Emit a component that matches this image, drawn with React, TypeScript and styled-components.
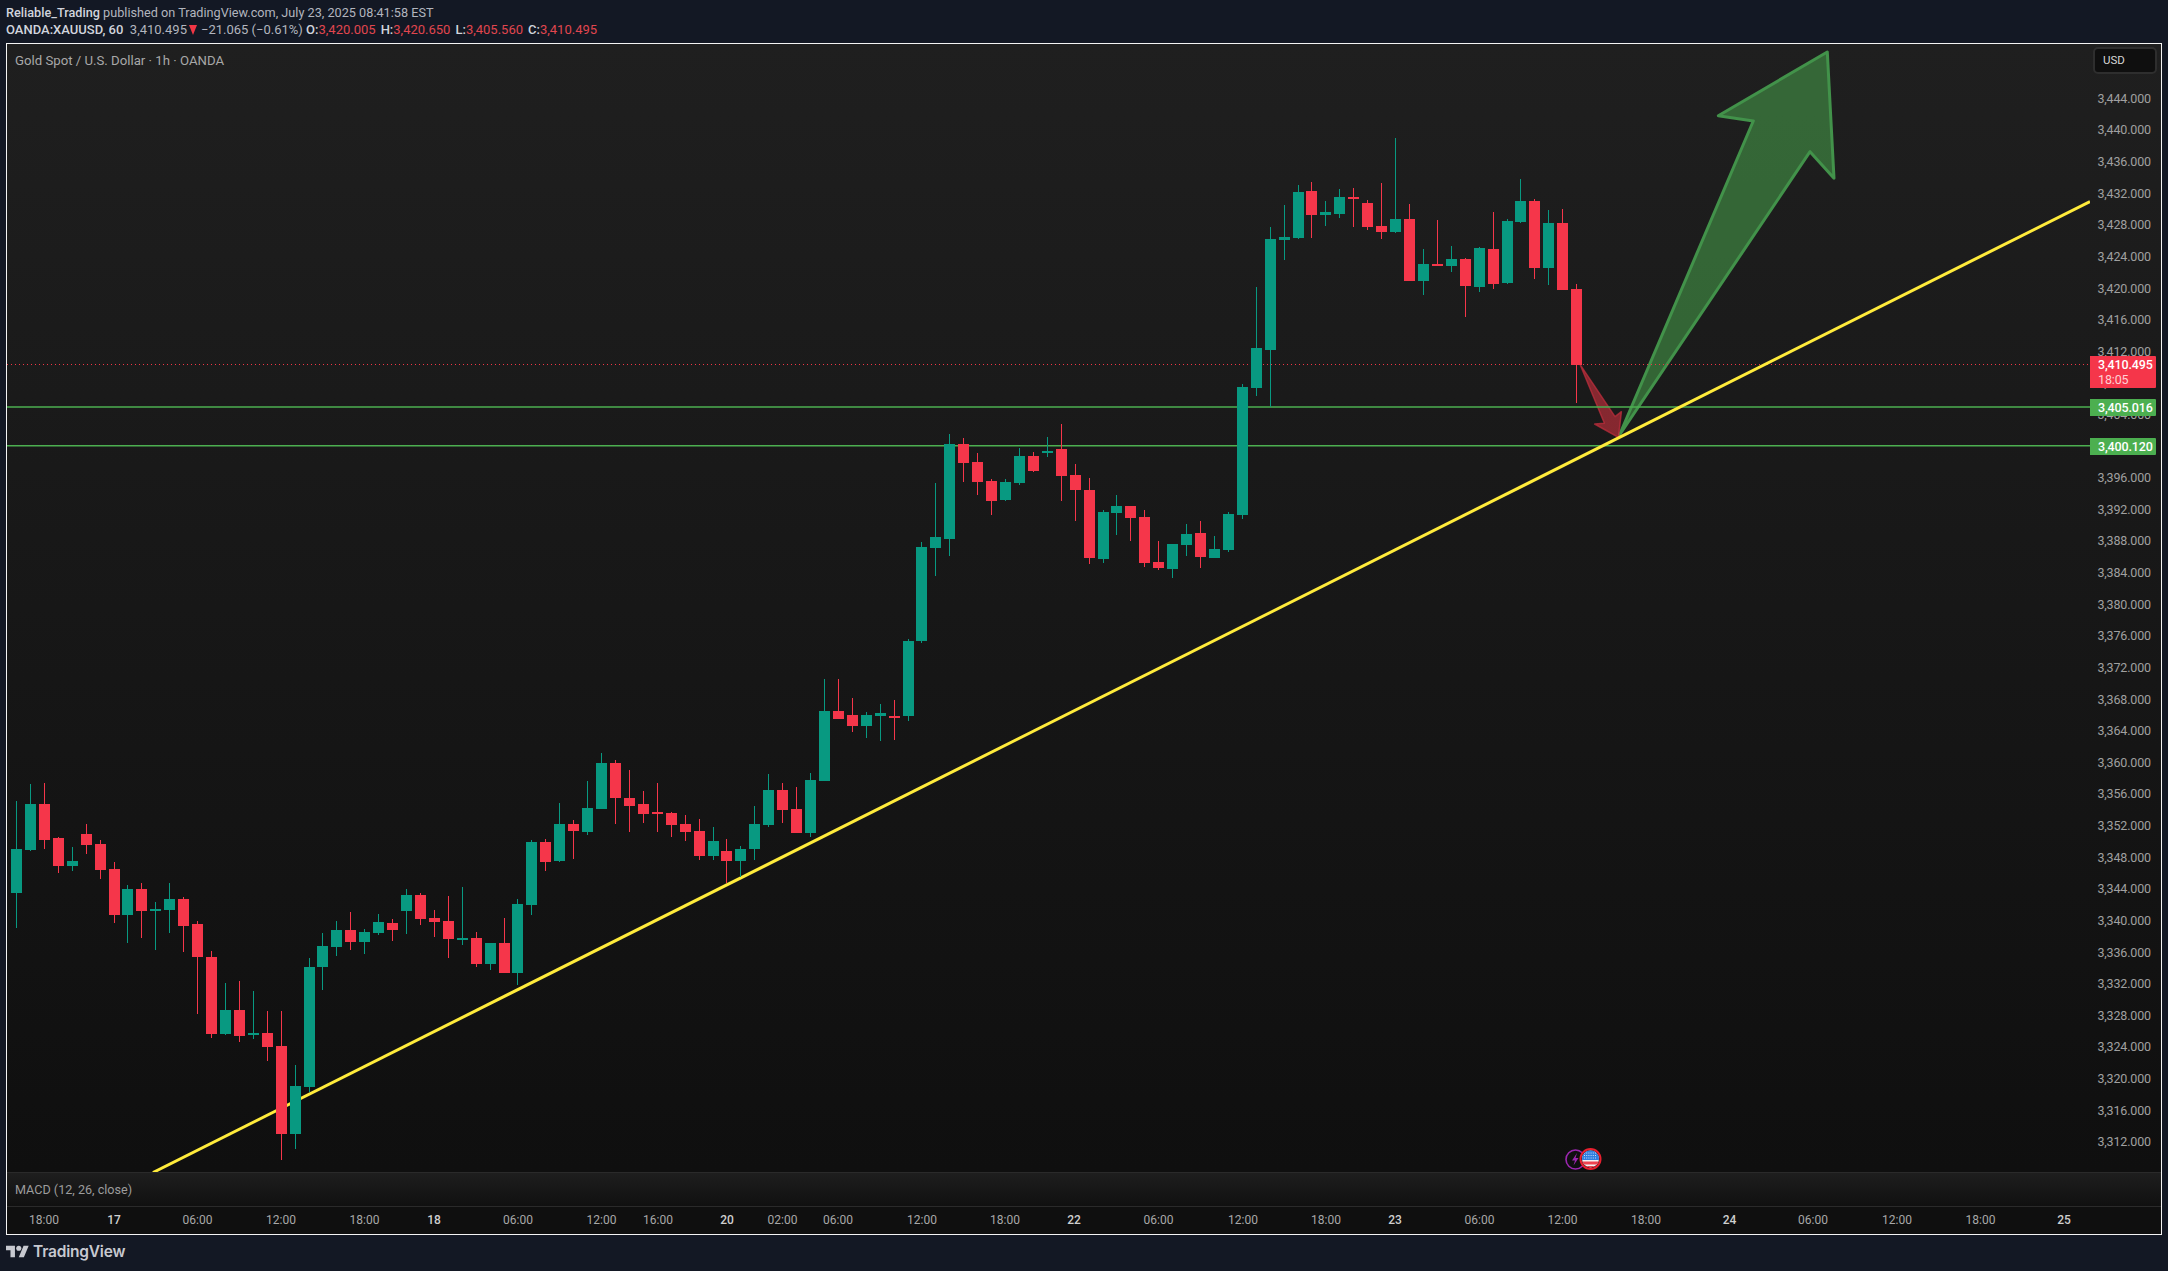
import React from "react";
import styled, { createGlobalStyle } from "styled-components";

const GREEN = "#089981";
const RED = "#f5364a";
const FONT = `Roboto, "Liberation Sans", sans-serif`;

const GlobalStyle = createGlobalStyle`
  html, body {
    margin: 0;
    height: 100%;
    background: #131824;
    overflow: hidden;
  }
  #root {
    height: 100%;
  }
`;

const Page = styled.div`
  display: flex;
  flex-direction: column;
  width: 2168px;
  height: 1271px;
  font-family: ${FONT};
  background: #131824;
`;

const Header = styled.header`
  height: 43px;
  padding: 4px 0 0 6px;
  box-sizing: border-box;
  font-size: 12.7px;
  line-height: 17px;
  color: #b2b5be;
  white-space: nowrap;
`;

const QuoteLine = styled.div`
  font-size: 13px;
`;

const Strong = styled.span`
  color: #d1d4dc;
  font-weight: 500;
`;

const Quote = styled.span`
  color: #e0464f;
  margin-right: 5px;
`;

const Ohlc = styled.span`
  color: #d1d4dc;
  font-weight: 500;
`;

const Arrow = styled.span`
  display: inline-block;
  width: 0;
  height: 0;
  margin: 0 4px 0 2px;
  border-left: 4.5px solid transparent;
  border-right: 4.5px solid transparent;
  border-top: 10px solid #f23645;
  vertical-align: -1px;
`;

const Frame = styled.div`
  width: 2156px;
  height: 1192px;
  margin-left: 6px;
  box-sizing: border-box;
  border: 1px solid #f4f4f4;
  display: flex;
  flex-direction: column;
`;

const MainRow = styled.div`
  display: flex;
  height: 1128px;
  background: linear-gradient(#1f1f1f, #0f0f0f);
`;

const ChartArea = styled.div`
  position: relative;
  width: 2083px;
`;

const ChartSvg = styled.svg`
  display: block;
  width: 2083px;
  height: 1128px;
`;

const Title = styled.div`
  position: absolute;
  left: 8px;
  top: 9px;
  font-size: 13.2px;
  line-height: 16px;
  color: #a8a8a8;
`;

const PriceAxis = styled.div`
  position: relative;
  width: 71px;
`;

const PriceTick = styled.div`
  position: absolute;
  right: 10px;
  font-size: 12.5px;
  letter-spacing: -0.15px;
  line-height: 14px;
  color: #a0a0a0;
  transform: translateY(-50%);
`;

const UnitButton = styled.div`
  position: absolute;
  left: 3px;
  top: 3px;
  width: 64px;
  height: 27px;
  box-sizing: border-box;
  padding-left: 8px;
  border: 2px solid #2e2e2e;
  border-radius: 5px;
  background: #0f0f0f;
  font-size: 11.5px;
  line-height: 23px;
  color: #d6d6d6;
`;

const PriceTag = styled.div<{ $bg: string }>`
  position: absolute;
  left: 0;
  width: 66px;
  box-sizing: border-box;
  padding: 1px 0 1px 8px;
  background: ${(p) => p.$bg};
  font-size: 12.5px;
  letter-spacing: -0.15px;
  font-weight: 500;
  line-height: 15px;
  color: #fff;
  border-radius: 0 1px 1px 0;
`;

const TagTimer = styled.div`
  color: #ffd0d4;
  font-weight: 400;
`;

const MacdRow = styled.div`
  height: 34px;
  box-sizing: border-box;
  border-top: 1px solid #2a2a2a;
  padding-left: 8px;
  background: linear-gradient(#1e1e1e, #101010);
  font-size: 12.6px;
  line-height: 33px;
  color: #9c9c9c;
`;

const TimeAxis = styled.div`
  position: relative;
  height: 28px;
  box-sizing: border-box;
  border-top: 1px solid #2a2a2a;
  background: #0f0f0f;
`;

const TimeLabel = styled.span<{ $day: boolean }>`
  position: absolute;
  top: 6px;
  transform: translateX(-50%);
  font-size: 12px;
  line-height: 14px;
  font-weight: ${(p) => (p.$day ? 500 : 400)};
  color: ${(p) => (p.$day ? "#cfcfcf" : "#a8a8a8")};
`;

const Footer = styled.footer`
  display: flex;
  align-items: center;
  gap: 4px;
  height: 36px;
  padding: 0 0 4px 6px;
  box-sizing: border-box;
`;

const LogoMark = styled.svg`
  width: 23px;
  height: 17px;
  fill: #c7c9d0;
`;

const LogoWord = styled.span`
  font-family: Inter, ${FONT};
  font-size: 15.5px;
  font-weight: 600;
  letter-spacing: -0.2px;
  color: #c7c9d0;
`;

type Candle = { up: boolean; wickTop: number; top: number; bottom: number; wickBottom: number };
type Row = [number, number, number, number, number];

// rows are read off crops of the chart at 3x: [up, high, open/close, open/close, low]
const rows = (base: number, list: Row[]): Candle[] =>
  list.map(([up, a, b, c, d]) => ({
    up: up === 1,
    wickTop: base + a / 3,
    top: base + b / 3,
    bottom: base + c / 3,
    wickBottom: base + d / 3,
  }));

const candles: Candle[] = [
  ...rows(760, [
    [1, 123, 267, 399, 503],
    [1, 72, 132, 270, 273],
    [0, 69, 132, 240, 267],
    [0, 231, 234, 318, 339],
    [1, 261, 303, 318, 333],
    [0, 192, 222, 255, 282],
    [0, 240, 252, 330, 357],
    [0, 306, 327, 465, 489],
    [1, 375, 387, 465, 549],
    [0, 369, 387, 453, 534],
    [1, 426, 447, 453, 570],
    [1, 369, 417, 450, 519],
    [0, 411, 417, 498, 576],
    [0, 483, 492, 591, 762],
    [0, 573, 591, 822, 834],
    [1, 669, 750, 822, 825],
    [0, 663, 750, 828, 846],
    [1, 693, 819, 825, 837],
    [0, 753, 819, 861, 903],
    [0, 753, 858, 1122, 1200],
    [1, 915, 978, 1122, 1167],
    [1, 594, 621, 981, 996],
    [1, 519, 558, 621, 690],
    [1, 483, 510, 561, 588],
    [0, 456, 510, 546, 570],
    [1, 507, 516, 546, 582],
    [1, 462, 486, 519, 525],
    [0, 477, 489, 510, 543],
    [1, 387, 405, 453, 522],
    [0, 399, 405, 477, 495],
    [0, 450, 474, 486, 531],
    [0, 408, 483, 537, 594],
    [1, 381, 534, 537, 555],
    [0, 516, 534, 612, 621],
    [1, 549, 549, 612, 630],
    [0, 474, 549, 639, 639],
    [1, 417, 432, 639, 675],
    [1, 240, 246, 435, 465],
    [0, 237, 246, 306, 333],
  ]),
  ...rows(720, [
    [1, 249, 312, 423, 426],
    [0, 300, 312, 333, 417],
    [1, 183, 264, 336, 345],
    [1, 99, 129, 267, 267],
    [0, 120, 129, 234, 312],
    [0, 150, 234, 258, 336],
    [0, 213, 252, 282, 309],
    [0, 189, 276, 279, 336],
    [0, 276, 279, 315, 351],
    [0, 285, 312, 336, 363],
    [0, 297, 333, 408, 420],
    [1, 321, 363, 408, 420],
    [0, 357, 393, 423, 488],
    [1, 378, 387, 423, 471],
    [1, 258, 312, 387, 420],
    [1, 162, 210, 315, 321],
    [0, 189, 210, 270, 309],
    [0, 201, 267, 339, 339],
    [1, 159, 180, 339, 351],
    [1, -123, -27, 183, 183],
    [0, -123, -27, -3, -3],
    [0, -66, -15, 18, 36],
    [1, -24, -15, 18, 54],
    [1, -48, -21, -12, 63],
    [0, -60, -12, -9, 60],
    [1, -243, -237, -12, 3],
    [1, -252, -519, -234, -231],
  ]).map((c, i) => (i === 26 ? { ...c, wickTop: 542, top: 547, bottom: 641, wickBottom: 643 } : c)),
  ...rows(410, [
    [1, 219, 381, 414, 498],
    [1, 72, 102, 387, 438],
    [0, 84, 102, 159, 216],
    [0, 129, 156, 216, 255],
    [0, 207, 213, 273, 315],
    [1, 207, 216, 270, 273],
    [1, 114, 138, 219, 225],
    [0, 126, 138, 183, 186],
    [1, 81, 123, 129, 141],
    [0, 42, 117, 198, 273],
    [0, 162, 195, 240, 333],
    [0, 204, 240, 444, 462],
    [1, 300, 306, 447, 459],
    [1, 255, 288, 309, 375],
    [0, 288, 288, 324, 393],
    [0, 300, 321, 459, 471],
    [0, 393, 456, 474, 480],
    [1, 402, 402, 477, 504],
    [1, 342, 372, 405, 438],
    [0, 333, 369, 441, 474],
    [1, 378, 417, 444, 444],
    [1, 306, 312, 420, 426],
    [1, -78, -69, 315, 327],
  ]),
  ...rows(120, [
    [1, 501, 684, 804, 828],
    [1, 321, 357, 690, 861],
    [1, 255, 351, 360, 420],
    [1, 195, 216, 354, 357],
    [0, 186, 213, 285, 354],
    [1, 243, 276, 285, 318],
    [1, 207, 231, 282, 294],
    [0, 204, 231, 234, 321],
    [0, 240, 249, 321, 330],
    [0, 189, 318, 336, 357],
    [1, 54, 297, 336, 339],
    [0, 252, 297, 483, 483],
    [1, 387, 432, 483, 525],
    [0, 300, 432, 435, 438],
    [1, 378, 417, 438, 456],
    [0, 414, 417, 498, 591],
    [1, 381, 384, 501, 516],
    [0, 276, 387, 492, 507],
    [1, 297, 303, 489, 492],
    [1, 177, 243, 306, 309],
    [0, 237, 243, 444, 477],
    [1, 270, 309, 444, 495],
    [0, 267, 309, 510, 510],
    [0, 492, 507, 735, 849],
  ]),
];

const priceY = (price: number) => 98.8 + ((3444 - price) / 4) * 31.62;
const priceTicks: number[] = [];
for (let p = 3444; p >= 3312; p -= 4) priceTicks.push(p);

const formatPrice = (p: number) => `3,${String(p - 3000).padStart(3, "0")}.000`;

const timeLabels: [string, number, boolean][] = [
  ["18:00", 44, false],
  ["17", 114, true],
  ["06:00", 197.5, false],
  ["12:00", 281, false],
  ["18:00", 364.5, false],
  ["18", 434, true],
  ["06:00", 518, false],
  ["12:00", 601.5, false],
  ["16:00", 658, false],
  ["20", 727, true],
  ["02:00", 782.5, false],
  ["06:00", 838, false],
  ["12:00", 922, false],
  ["18:00", 1005, false],
  ["22", 1074, true],
  ["06:00", 1158.5, false],
  ["12:00", 1243, false],
  ["18:00", 1326, false],
  ["23", 1395, true],
  ["06:00", 1479.5, false],
  ["12:00", 1562.5, false],
  ["18:00", 1646, false],
  ["24", 1729.5, true],
  ["06:00", 1813, false],
  ["12:00", 1897, false],
  ["18:00", 1980.5, false],
  ["25", 2064, true],
];

const CandleBars = () => (
  <g shapeRendering="crispEdges">
    {candles.map((c, i) => {
      const left = Math.round(16.5 + i * 13.93 - 5.5);
      const color = c.up ? GREEN : RED;
      return (
        <g key={i} fill={color}>
          <rect x={left + 5} y={c.wickTop} width={1} height={c.wickBottom - c.wickTop} />
          <rect x={left} y={c.top} width={11} height={Math.max(c.bottom - c.top, 2)} />
        </g>
      );
    })}
  </g>
);

const EventMarks = () => (
  <g>
    <circle cx={1575.5} cy={1159.5} r={9.5} fill="none" stroke="#9c27b0" strokeWidth={1.6} />
    <path d="M1577 1153l-5 7.5h3l-1.5 5 5-7.5h-3z" fill="#9c27b0" />
    <clipPath id="flag-clip">
      <circle cx={1590.5} cy={1159} r={8.5} />
    </clipPath>
    <circle cx={1590.5} cy={1159} r={10} fill="#0f0f0f" stroke="#e8202f" strokeWidth={2} />
    <g clipPath="url(#flag-clip)">
      <rect x={1582} y={1150} width={17} height={18} fill="#f4f4f4" />
      <rect x={1582} y={1150} width={17} height={10} fill="#2f7fe0" />
      <rect x={1582} y={1161.5} width={17} height={3} fill="#ef4450" />
      <rect x={1582} y={1166} width={17} height={3} fill="#ef4450" />
      <path
        d="M1584 1153h13M1584 1155.500h13M1584 1158h13"
        stroke="#dbe9fb"
        strokeWidth={0.9}
        strokeDasharray="1 1.2"
      />
    </g>
  </g>
);

const Drawings = () => (
  <g>
    <path
      d="M1619.500 435L1753.300 121L1718.300 115.700L1827.300 52L1834 178.300L1810 151.700Z"
      fill="rgba(76,175,80,0.5)"
      stroke="#42924a"
      strokeWidth={3}
      strokeLinejoin="round"
    />
    <path
      d="M1580 364.300L1615 416.700L1621.400 411.700L1618.400 437.300L1594.600 424L1604.400 423.300Z"
      fill="rgba(242,54,69,0.5)"
      stroke="rgba(190,45,60,0.75)"
      strokeWidth={1.5}
      strokeLinejoin="round"
    />
    <line x1={7} x2={2090} y1={407} y2={407} stroke="#4caf50" strokeWidth={1.5} />
    <line x1={7} x2={2090} y1={445.700} y2={445.700} stroke="#4caf50" strokeWidth={1.5} />
    <line
      x1={7}
      x2={2090}
      y1={364.500}
      y2={364.500}
      stroke="#f23645"
      strokeWidth={1}
      strokeDasharray="1 3"
      shapeRendering="crispEdges"
    />
    <line x1={153} y1={1172.500} x2={2090} y2={201.500} stroke="#ffeb3b" strokeWidth={3} />
  </g>
);

export default function App() {
  return (
    <Page>
      <GlobalStyle />
      <Header>
        <div>
          <Strong>Reliable_Trading</Strong> published on TradingView.com, July 23, 2025 08:41:58 EST
        </div>
        <QuoteLine>
          <Strong>OANDA:XAUUSD, 60</Strong>&nbsp; 3,410.495
          <Arrow />
          −21.065 (−0.61%) <Ohlc>O:</Ohlc>
          <Quote>3,420.005</Quote>
          <Ohlc>H:</Ohlc>
          <Quote>3,420.650</Quote>
          <Ohlc>L:</Ohlc>
          <Quote>3,405.560</Quote>
          <Ohlc>C:</Ohlc>
          <Quote>3,410.495</Quote>
        </QuoteLine>
      </Header>
      <Frame>
        <MainRow>
          <ChartArea>
            <ChartSvg viewBox="7 44 2083 1128">
              <Drawings />
              <CandleBars />
              <EventMarks />
            </ChartSvg>
            <Title>Gold Spot / U.S. Dollar · 1h · OANDA</Title>
          </ChartArea>
          <PriceAxis>
            {priceTicks.map((p) => (
              <PriceTick key={p} style={{ top: priceY(p) - 44 }}>
                {formatPrice(p)}
              </PriceTick>
            ))}
            <UnitButton>USD</UnitButton>
            <PriceTag $bg="#f5364a" style={{ top: 312 }}>
              3,410.495
              <TagTimer>18:05</TagTimer>
            </PriceTag>
            <PriceTag $bg="#4caf50" style={{ top: 355 }}>
              3,405.016
            </PriceTag>
            <PriceTag $bg="#4caf50" style={{ top: 394 }}>
              3,400.120
            </PriceTag>
          </PriceAxis>
        </MainRow>
        <MacdRow>MACD (12, 26, close)</MacdRow>
        <TimeAxis>
          {timeLabels.map(([label, x, day]) => (
            <TimeLabel key={`${label}-${x}`} $day={day} style={{ left: x - 7 }}>
              {label}
            </TimeLabel>
          ))}
        </TimeAxis>
      </Frame>
      <Footer>
        <LogoMark viewBox="0 2 36 22">
          <path d="M14 22H7V11H0V4h14v18zM28 22h-8l7.500-18h8L28 22z" />
          <circle cx="20" cy="8" r="4" />
        </LogoMark>
        <LogoWord>TradingView</LogoWord>
      </Footer>
    </Page>
  );
}
